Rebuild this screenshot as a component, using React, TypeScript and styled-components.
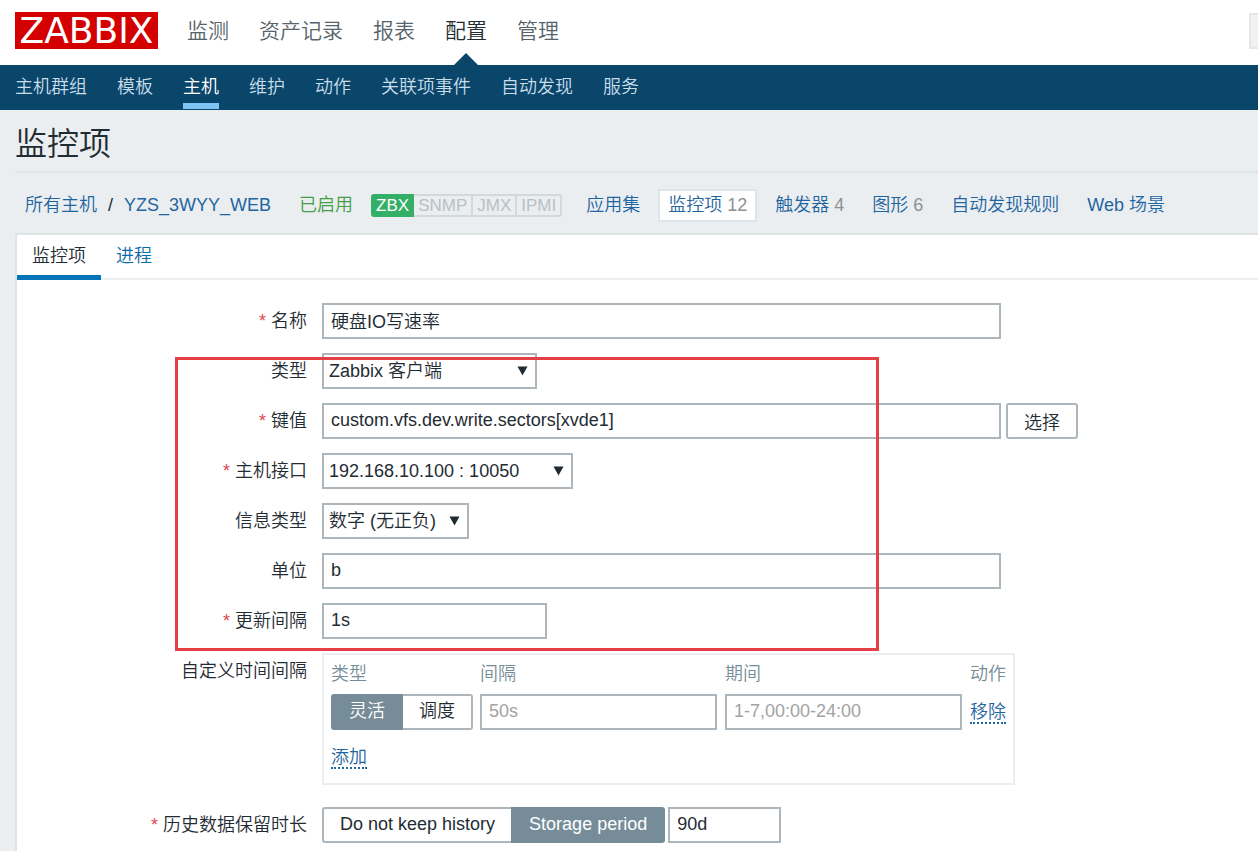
import React, { useState } from "react";
import styled, { createGlobalStyle, css } from "styled-components";

const GlobalStyle = createGlobalStyle`
  *, *::before, *::after { box-sizing: border-box; }
  body {
    margin: 0;
    overflow-x: hidden;
    background: #ebeef0;
    color: #1f2c33;
  }
  body, input, select, button {
    font-family: "Liberation Sans", "Noto Sans CJK SC", sans-serif;
    font-size: 18px;
    font-weight: 350;
  }
  a { color: #1f65a0; text-decoration: none; }
`;

const Page = styled.div`
  display: flex;
  flex-direction: column;
  min-height: 100vh;
`;

const Header = styled.header`
  display: flex;
  align-items: center;
  height: 65px;
  padding-left: 15px;
  overflow: hidden;
  background: #fff;
`;

const Logo = styled.a`
  flex: none;
  width: 143px;
  height: 37px;
  margin-bottom: 4px;
  background: #d40000;
  color: #fff;
  font-family: "DejaVu Sans", sans-serif;
  font-size: 36px;
  font-weight: 400;
  line-height: 37px;
  text-align: center;
`;

const MainMenu = styled.nav`
  display: flex;
  flex: none;
  align-self: stretch;
  gap: 30px;
  margin-left: 29px;
`;

const MainLink = styled.a<{ $active?: boolean }>`
  position: relative;
  color: ${(p) => (p.$active ? "#1f2c33" : "#56636b")};
  font-size: 21px;
  line-height: 62px;
  ${(p) =>
    p.$active &&
    css`
      &::after {
        content: "";
        position: absolute;
        bottom: 0;
        left: 50%;
        margin-left: -12px;
        border: 12px solid transparent;
        border-top: 0;
        border-bottom-color: #0a466a;
      }
    `}
`;

const Search = styled.input`
  flex: none;
  width: 210px;
  height: 36px;
  margin: 0 -201px 4px auto;
  border: 2px solid #e6e6e6;
  background: #f1f1f1;
`;

const SubMenu = styled.nav`
  display: flex;
  gap: 30px;
  height: 45px;
  padding: 0 15px 1px;
  background: #0a466a;
`;

const SubLink = styled.a<{ $active?: boolean }>`
  border-bottom: 6px solid ${(p) => (p.$active ? "#7dc4f5" : "transparent")};
  color: ${(p) => (p.$active ? "#fff" : "#c8dcea")};
  line-height: 45px;
  height: 44px;
`;

const Title = styled.h1`
  margin: 0 0 0 15px;
  padding: 15px 0 8px;
  border-bottom: 2px solid #dfe4e7;
  font-size: 32px;
  font-weight: 350;
  line-height: 38px;
`;

const HostBar = styled.div`
  display: flex;
  flex-wrap: wrap;
  align-items: center;
  gap: 8px;
  padding: 16px 15px 11px;
`;

const HostItem = styled.div<{ $selected?: boolean }>`
  display: flex;
  gap: 5px;
  padding: 0 8px;
  border: 2px solid ${(p) => (p.$selected ? "#dfe4e7" : "transparent")};
  background: ${(p) => (p.$selected ? "#fff" : "transparent")};
  line-height: 29px;
`;

const Crumbs = styled(HostItem)`
  gap: 11px;
`;

const Enabled = styled.span`
  color: #429e47;
`;

const Count = styled.span`
  color: #8a9296;
`;

const Badges = styled.div`
  display: flex;
  margin-right: 6px;
`;

const Badge = styled.span<{ $on?: boolean }>`
  padding: 0 ${(p) => (p.$on ? 3 : 4)}px;
  border: 2px solid ${(p) => (p.$on ? "#34af67" : "#d3d8da")};
  background: ${(p) => (p.$on ? "#34af67" : "transparent")};
  color: ${(p) => (p.$on ? "#fff" : "#b9c0c4")};
  font-size: 17px;
  line-height: 19px;
  & + & { border-left-width: 0; }
  &:first-child { border-radius: 3px 0 0 3px; }
  &:last-child { border-radius: 0 3px 3px 0; }
`;

const Panel = styled.main`
  flex: 1;
  margin-left: 15px;
  border: 2px solid #dfe4e7;
  border-width: 2px 0 0 2px;
  background: #fff;
`;

const Tabs = styled.div`
  display: flex;
  border-bottom: 2px solid #ebeef0;
`;

const Tab = styled.a<{ $active?: boolean }>`
  height: 45px;
  margin-bottom: -2px;
  padding: 0 15px;
  border-bottom: 5px solid ${(p) => (p.$active ? "#0275b8" : "transparent")};
  color: ${(p) => (p.$active ? "#1f2c33" : "#0f6ba8")};
  line-height: 42px;
`;

const Form = styled.form`
  position: relative;
  display: flex;
  flex-direction: column;
  gap: 14px;
  padding: 23px 15px 14px 0;
`;

const Row = styled.div`
  display: grid;
  grid-template-columns: 290px minmax(0, 1fr);
  column-gap: 15px;
`;

const rowLabel = css<{ $required?: boolean }>`
  line-height: 36px;
  text-align: right;
  ${(p) =>
    p.$required &&
    css`
      &::before {
        content: "* ";
        color: #dc4a50;
      }
    `}
`;

const Label = styled.label`
  ${rowLabel}
`;

const GroupLabel = styled.span`
  ${rowLabel}
`;

const Field = styled.div`
  display: flex;
  align-items: flex-start;
`;

const TextBox = styled.input<{ $width: number }>`
  width: ${(p) => p.$width}px;
  max-width: 100%;
  height: 36px;
  padding: 0 7px 2px;
  border: 2px solid #acb6bb;
  border-radius: 0;
  background: #fff;
  color: #1f2c33;
  &::placeholder { color: #a3a3a3; opacity: 1; }
`;

const SelectWrap = styled.div<{ $width: number }>`
  position: relative;
  width: ${(p) => p.$width}px;
`;

const Select = styled.select`
  appearance: none;
  width: 100%;
  height: 36px;
  padding: 0 24px 0 5px;
  border: 2px solid #acb6bb;
  border-radius: 0;
  background: #fff;
  color: #1f2c33;
`;

const Arrow = styled.svg`
  position: absolute;
  top: 13px;
  right: 9px;
  pointer-events: none;
`;

const Button = styled.button`
  height: 36px;
  margin-left: 5px;
  padding: 0 16px;
  border: 2px solid #acb6bb;
  border-radius: 3px;
  background: #fff;
  color: #1f2c33;
`;

const Segments = styled.div`
  display: flex;
`;

const Segment = styled.label`
  height: 36px;
  padding: 0 16px;
  border: 2px solid #acb6bb;
  line-height: 31px;
  white-space: nowrap;
  &:first-child { border-right-width: 0; border-radius: 3px 0 0 3px; }
  &:last-child { border-left-width: 0; border-radius: 0 3px 3px 0; }
  &:has(input:checked) {
    border-width: 2px;
    border-color: #768d99;
    background: #768d99;
    color: #fff;
  }
`;

const HiddenRadio = styled.input`
  position: absolute;
  opacity: 0;
  pointer-events: none;
`;

const IntervalBox = styled.div`
  height: 132px;
  margin-bottom: 8px;
  padding: 6px 7px;
  border: 2px solid #ebeef0;
`;

const IntervalTable = styled.table`
  border-collapse: collapse;
  th, td { padding: 0 8px 0 0; text-align: left; }
  th:first-child, td:first-child { padding-right: 7px; }
  th:last-child, td:last-child { padding-right: 0; }
  th {
    padding-bottom: 7px;
    color: #768d99;
    font-weight: 350;
    line-height: 26px;
  }
  td { vertical-align: middle; }
  td > input { display: block; }
  tfoot td { height: 53px; }
`;

const ActionLink = styled.a`
  display: inline-block;
  height: 24px;
  border-bottom: 2px dotted #1f65a0;
  line-height: 24px;
`;

const Highlight = styled.div`
  position: absolute;
  top: 77px;
  left: 158px;
  width: 704px;
  height: 294px;
  border: 3px solid #e33f45;
  pointer-events: none;
`;

const History = styled(TextBox)`
  margin-left: 3px;
`;

function Dropdown({ id, width, options }: { id: string; width: number; options: string[] }) {
  return (
    <SelectWrap $width={width}>
      <Select id={id}>
        {options.map((o) => (
          <option key={o}>{o}</option>
        ))}
      </Select>
      <Arrow width="11" height="10" viewBox="0 0 11 10" aria-hidden="true">
        <path d="M0.5 0.5H10.5L5.5 9.5Z" fill="#1f2c33" />
      </Arrow>
    </SelectWrap>
  );
}

function Segmented({ name, options, initial }: { name: string; options: string[]; initial: string }) {
  const [value, setValue] = useState(initial);
  return (
    <Segments role="radiogroup">
      {options.map((o) => (
        <Segment key={o}>
          <HiddenRadio type="radio" name={name} checked={value === o} onChange={() => setValue(o)} />
          {o}
        </Segment>
      ))}
    </Segments>
  );
}

const mainItems = ["监测", "资产记录", "报表", "配置", "管理"];
const subItems = ["主机群组", "模板", "主机", "维护", "动作", "关联项事件", "自动发现", "服务"];
const hostLinks: { text: string; count?: number }[] = [
  { text: "应用集" },
  { text: "监控项", count: 12 },
  { text: "触发器", count: 4 },
  { text: "图形", count: 6 },
  { text: "自动发现规则" },
  { text: "Web 场景" },
];

export default function App() {
  return (
    <Page>
      <GlobalStyle />
      <Header>
        <Logo href="#">ZABBIX</Logo>
        <MainMenu>
          {mainItems.map((t) => (
            <MainLink key={t} href="#" $active={t === "配置"}>
              {t}
            </MainLink>
          ))}
        </MainMenu>
        <Search type="search" aria-label="搜索" />
      </Header>
      <SubMenu>
        {subItems.map((t) => (
          <SubLink key={t} href="#" $active={t === "主机"}>
            {t}
          </SubLink>
        ))}
      </SubMenu>
      <Title>监控项</Title>
      <HostBar>
        <Crumbs>
          <a href="#">所有主机</a>
          <span>/</span>
          <a href="#">YZS_3WYY_WEB</a>
        </Crumbs>
        <HostItem>
          <Enabled>已启用</Enabled>
        </HostItem>
        <Badges>
          <Badge $on>ZBX</Badge>
          <Badge>SNMP</Badge>
          <Badge>JMX</Badge>
          <Badge>IPMI</Badge>
        </Badges>
        {hostLinks.map((l) => (
          <HostItem key={l.text} $selected={l.text === "监控项"}>
            <a href="#">{l.text}</a>
            {l.count !== undefined && <Count>{l.count}</Count>}
          </HostItem>
        ))}
      </HostBar>
      <Panel>
        <Tabs>
          <Tab href="#" $active>
            监控项
          </Tab>
          <Tab href="#">进程</Tab>
        </Tabs>
        <Form>
          <Row>
            <Label htmlFor="name" $required>名称</Label>
            <Field>
              <TextBox id="name" $width={679} defaultValue="硬盘IO写速率" />
            </Field>
          </Row>
          <Row>
            <Label htmlFor="type">类型</Label>
            <Dropdown id="type" width={215} options={["Zabbix 客户端"]} />
          </Row>
          <Row>
            <Label htmlFor="key" $required>键值</Label>
            <Field>
              <TextBox id="key" $width={679} defaultValue="custom.vfs.dev.write.sectors[xvde1]" />
              <Button type="button">选择</Button>
            </Field>
          </Row>
          <Row>
            <Label htmlFor="interface" $required>主机接口</Label>
            <Dropdown id="interface" width={251} options={["192.168.10.100 : 10050"]} />
          </Row>
          <Row>
            <Label htmlFor="valuetype">信息类型</Label>
            <Dropdown id="valuetype" width={147} options={["数字 (无正负)"]} />
          </Row>
          <Row>
            <Label htmlFor="units">单位</Label>
            <Field>
              <TextBox id="units" $width={679} defaultValue="b" />
            </Field>
          </Row>
          <Row>
            <Label htmlFor="delay" $required>更新间隔</Label>
            <Field>
              <TextBox id="delay" $width={225} defaultValue="1s" />
            </Field>
          </Row>
          <Row>
            <GroupLabel>自定义时间间隔</GroupLabel>
            <Field>
              <IntervalBox>
                <IntervalTable>
                  <thead>
                    <tr>
                      <th>类型</th>
                      <th>间隔</th>
                      <th>期间</th>
                      <th>动作</th>
                    </tr>
                  </thead>
                  <tbody>
                    <tr>
                      <td>
                        <Segmented name="interval" options={["灵活", "调度"]} initial="灵活" />
                      </td>
                      <td>
                        <TextBox $width={237} placeholder="50s" aria-label="间隔" />
                      </td>
                      <td>
                        <TextBox $width={237} placeholder="1-7,00:00-24:00" aria-label="期间" />
                      </td>
                      <td>
                        <ActionLink href="#">移除</ActionLink>
                      </td>
                    </tr>
                  </tbody>
                  <tfoot>
                    <tr>
                      <td colSpan={4}>
                        <ActionLink href="#">添加</ActionLink>
                      </td>
                    </tr>
                  </tfoot>
                </IntervalTable>
              </IntervalBox>
            </Field>
          </Row>
          <Row>
            <Label htmlFor="history" $required>历史数据保留时长</Label>
            <Field>
              <Segmented
                name="history_mode"
                options={["Do not keep history", "Storage period"]}
                initial="Storage period"
              />
              <History id="history" $width={113} defaultValue="90d" />
            </Field>
          </Row>
          <Highlight />
        </Form>
      </Panel>
    </Page>
  );
}
